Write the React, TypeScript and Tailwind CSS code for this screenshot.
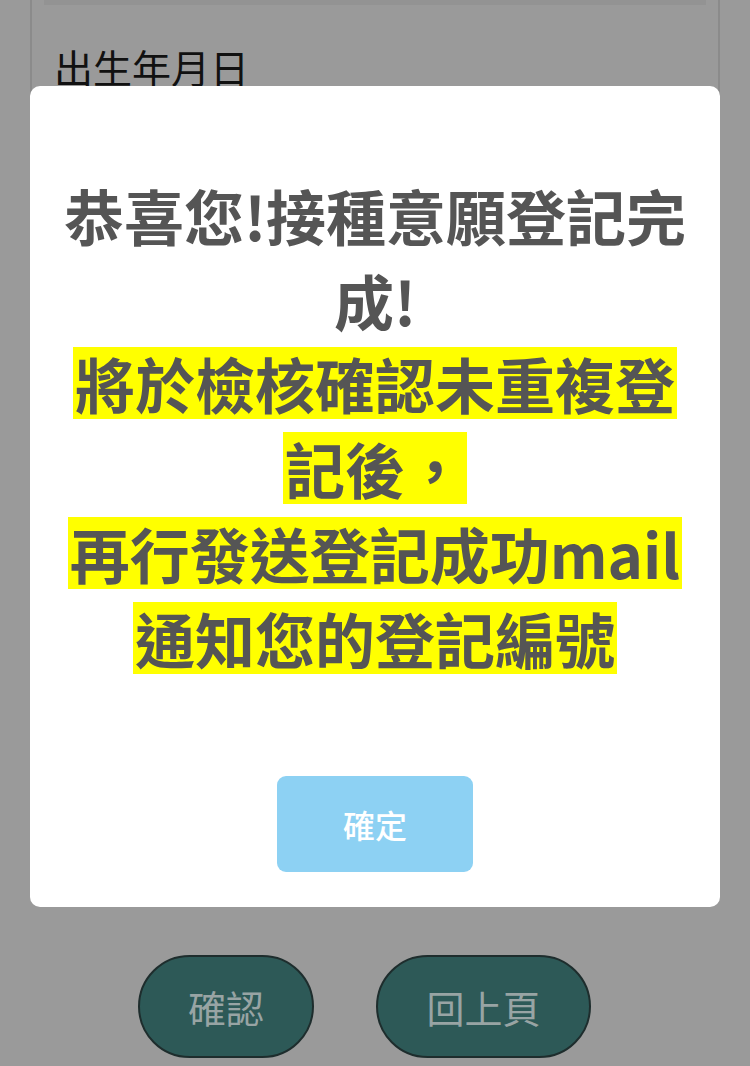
export default function App() {
  const highlightLines = ['將於檢核確認未重複登', '記後，', '再行發送登記成功mail', '通知您的登記編號'];

  return (
    <div className="relative w-[750px] h-[1066px] overflow-hidden bg-[#9a9a9a] font-['Noto_Sans_CJK_TC','Noto_Sans_CJK_SC',sans-serif]">
      {/* Page behind the overlay */}
      <div className="flex flex-col h-full">
        <div className="mx-[30px] h-[420px] border-x-2 border-[#8b8b8b]">
          <div className="mx-[12px] h-[5px] bg-[#939393]" />
          <div className="mt-[42px] pl-[22px] text-[39px] leading-[39px] text-[#111]">出生年月日</div>
        </div>
        <div className="flex-1" />
        <div className="flex justify-center gap-[62px] pb-[8px] pr-[21px]">
          <button className="w-[176px] h-[103px] rounded-full bg-[#2d5957] border-2 border-[#1e2d2d] text-[38px] text-[#98a4a4]">
            確認
          </button>
          <button className="w-[215px] h-[103px] rounded-full bg-[#2d5957] border-2 border-[#1e2d2d] text-[38px] text-[#98a4a4]">
            回上頁
          </button>
        </div>
      </div>

      {/* Modal */}
      <div className="absolute left-[30px] top-[86px] w-[690px] h-[821px] bg-white rounded-[10px] flex flex-col items-center pt-[86px]">
        <div className="text-center text-[60px] leading-[85px] font-bold text-[#555]">
          <div>恭喜您!接種意願登記完</div>
          <div>成!</div>
        </div>
        <div className="mt-[5px] flex flex-col items-center gap-[13px]">
          {highlightLines.map((line) => (
            <span
              key={line}
              className="inline-block h-[72px] leading-[72px] px-[2px] bg-[#ffff00] text-[60px] font-bold text-[#555]"
            >
              {line}
            </span>
          ))}
        </div>
        <button className="mt-[102px] w-[196px] h-[96px] rounded-[9px] bg-[#8dd1f3] text-white text-[32px] font-medium">
          確定
        </button>
      </div>
    </div>
  );
}
